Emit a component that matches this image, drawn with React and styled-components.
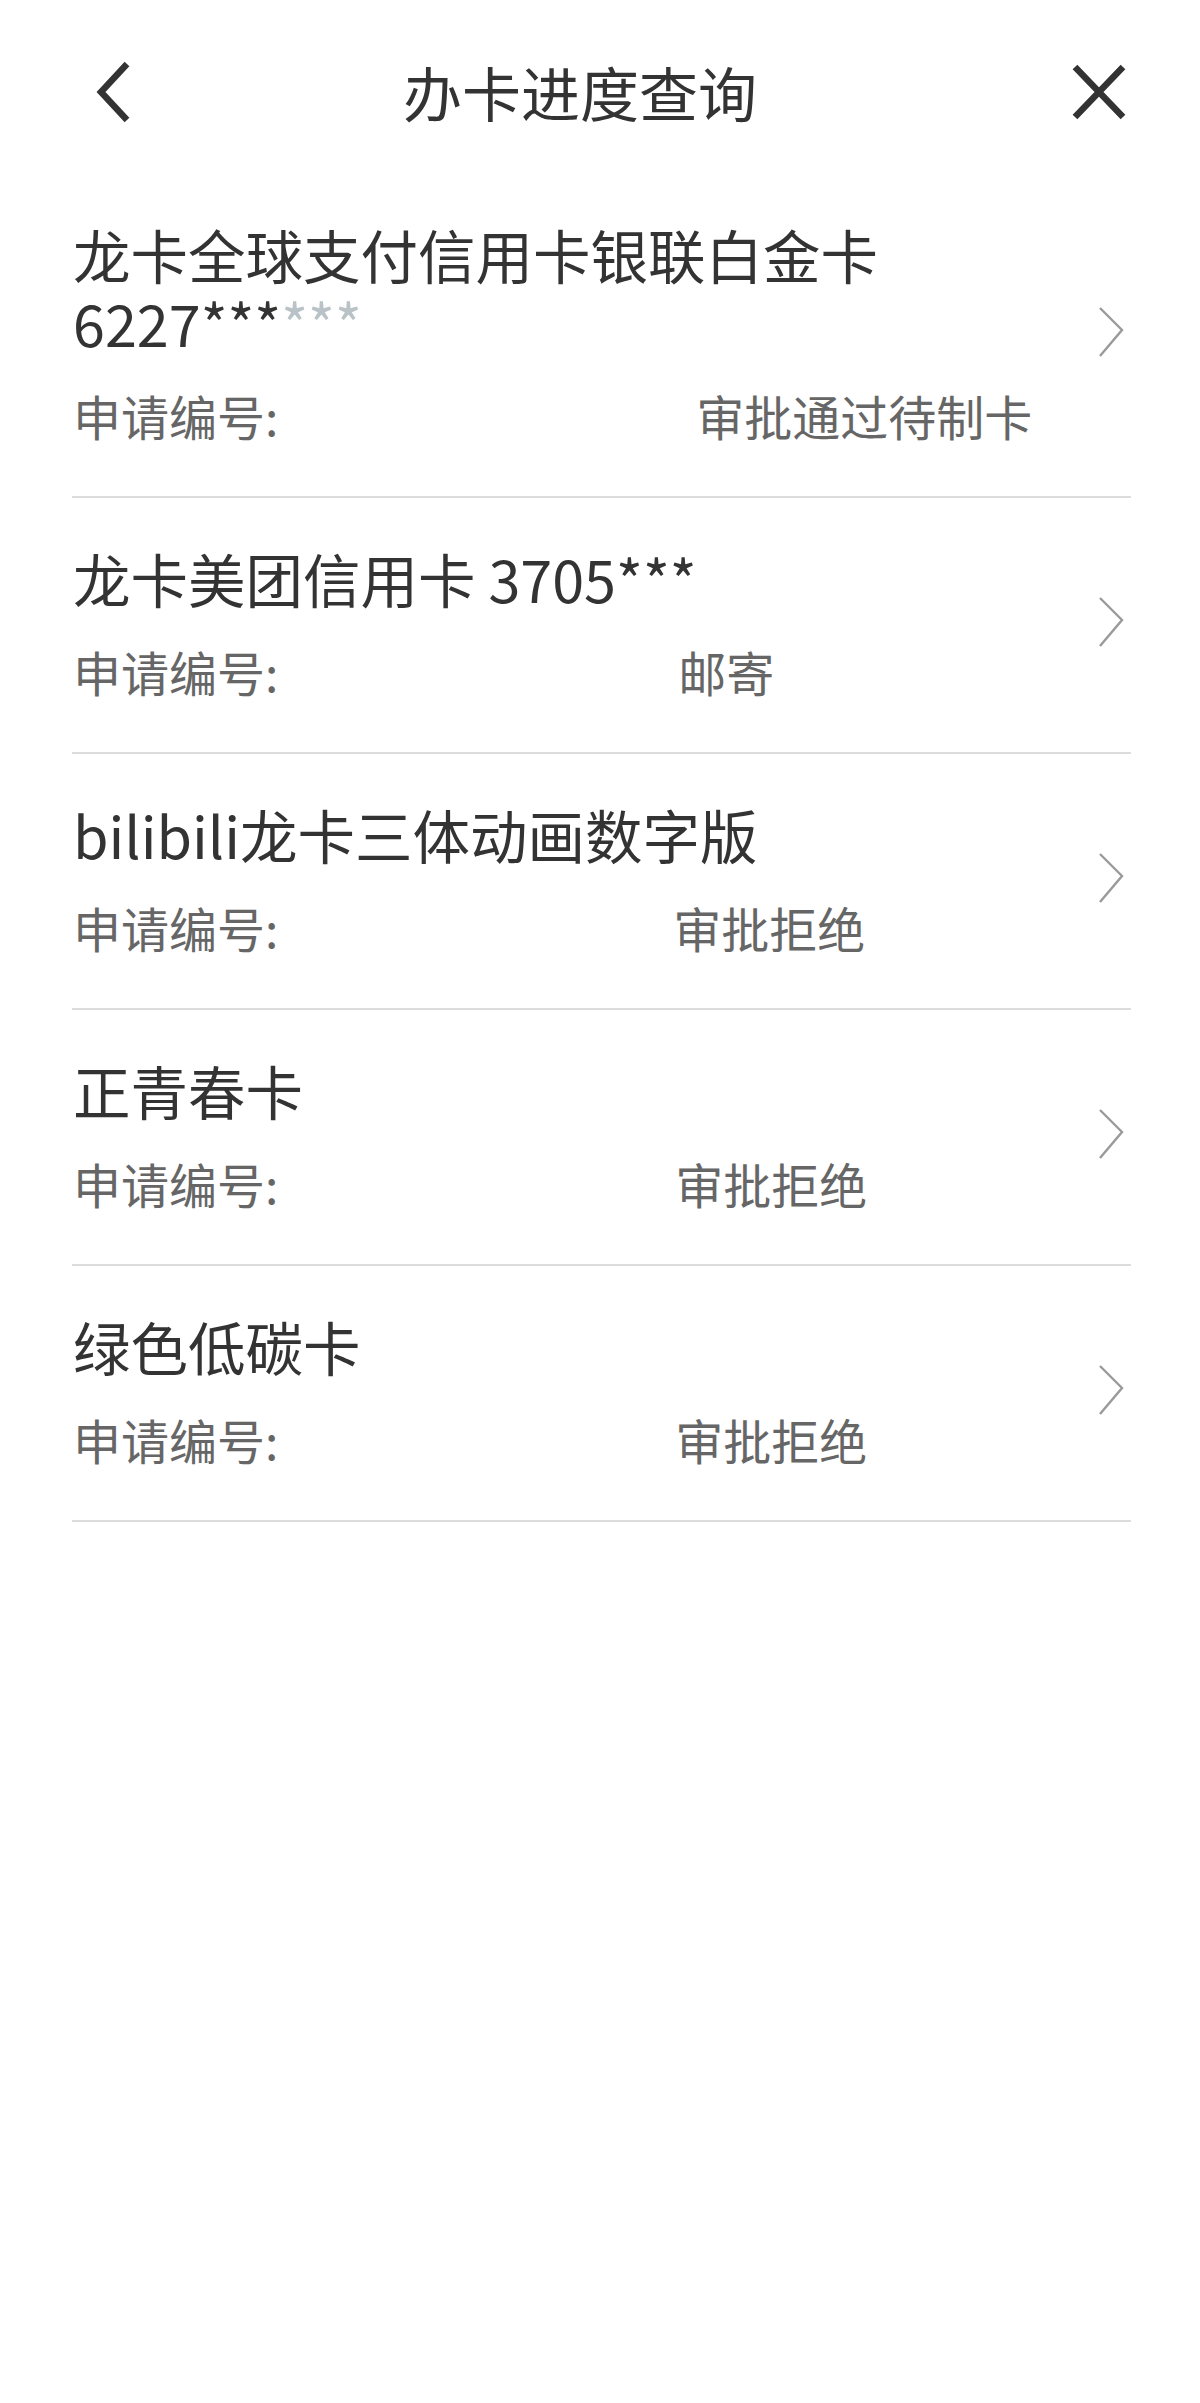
import styled, { createGlobalStyle } from "styled-components";

const records = [
  {
    id: 1,
    name: "龙卡全球支付信用卡银联白金卡",
    number: "6227***",
    masked: "***",
    status: "审批通过待制卡",
    gap: 418,
  },
  { id: 2, name: "龙卡美团信用卡 3705***", status: "邮寄", gap: 400 },
  { id: 3, name: "bilibili龙卡三体动画数字版", status: "审批拒绝", gap: 395 },
  { id: 4, name: "正青春卡", status: "审批拒绝", gap: 397 },
  { id: 5, name: "绿色低碳卡", status: "审批拒绝", gap: 397 },
];

const BackIcon = () => (
  <svg width="40" height="64" viewBox="0 0 40 64">
    <path d="M32 4 L6 32 L32 60" fill="none" stroke="#333" strokeWidth="6.5" />
  </svg>
);

const CloseIcon = () => (
  <svg width="56" height="56" viewBox="0 0 56 56">
    <path d="M4 3 L52 53 M52 3 L4 53" fill="none" stroke="#333" strokeWidth="6.5" />
  </svg>
);

const ChevronIcon = () => (
  <svg width="28" height="52" viewBox="0 0 28 52">
    <path d="M3 2 L25 24 L3 50" fill="none" stroke="#9a9a9a" strokeWidth="2.4" />
  </svg>
);

const App = () => {
  return (
    <>
      <GlobalStyle />
      <Page>
        <Header>
          <IconButton>
            <BackIcon />
          </IconButton>
          <PageTitle>办卡进度查询</PageTitle>
          <IconButton>
            <CloseIcon />
          </IconButton>
        </Header>
        <List>
          {records.map((record) => (
            <Item key={record.id}>
              <Body>
                <Name>{record.name}</Name>
                {record.number && (
                  <Name>
                    {record.number}
                    <Masked>{record.masked}</Masked>
                  </Name>
                )}
                <Sub>
                  <Label>申请编号:</Label>
                  <Redacted $w={record.gap} />
                  <Status>{record.status}</Status>
                </Sub>
              </Body>
              <ChevronIcon />
            </Item>
          ))}
        </List>
      </Page>
    </>
  );
};

export default App;

// styled Components
const GlobalStyle = createGlobalStyle`
  body {
    margin: 0;
    background: #fff;
    font-family: "Noto Sans CJK SC", "Noto Sans", sans-serif;
  }
`;

const Page = styled.div`
  min-height: 2403px;
  background: #fff;
`;

const Header = styled.header`
  display: flex;
  align-items: center;
  height: 174px;
  padding: 10px 73px 0 95px;
  box-sizing: border-box;
`;

const IconButton = styled.div`
  display: flex;
  align-items: center;
  justify-content: center;
`;

const PageTitle = styled.h1`
  flex: 1;
  margin: 0;
  padding-right: 46px;
  text-align: center;
  font-size: 59px;
  font-weight: 400;
  line-height: 70px;
  color: #333;
`;

const List = styled.ul`
  list-style: none;
  margin: 0;
  padding: 0 69px 0 72px;
`;

const Item = styled.li`
  display: flex;
  align-items: center;
  padding: 46px 6px 52px 1px;
  border-bottom: 2px solid #dcdcdc;
`;

const Body = styled.div`
  flex: 1;
  display: flex;
  flex-direction: column;
`;

const Name = styled.p`
  margin: 0;
  height: 68px;
  font-size: 57.5px;
  line-height: 68px;
  color: #333;
  white-space: nowrap;
`;

const Masked = styled.span`
  color: #b9c2c6;
`;

const Sub = styled.div`
  display: flex;
  align-items: center;
  margin-top: 30px;
  font-size: 48px;
  line-height: 58px;
  color: #666;
`;

const Label = styled.span`
  white-space: nowrap;
`;

const Redacted = styled.span`
  width: ${({ $w }) => $w}px;
  flex: none;
`;

const Status = styled.span`
  white-space: nowrap;
`;
